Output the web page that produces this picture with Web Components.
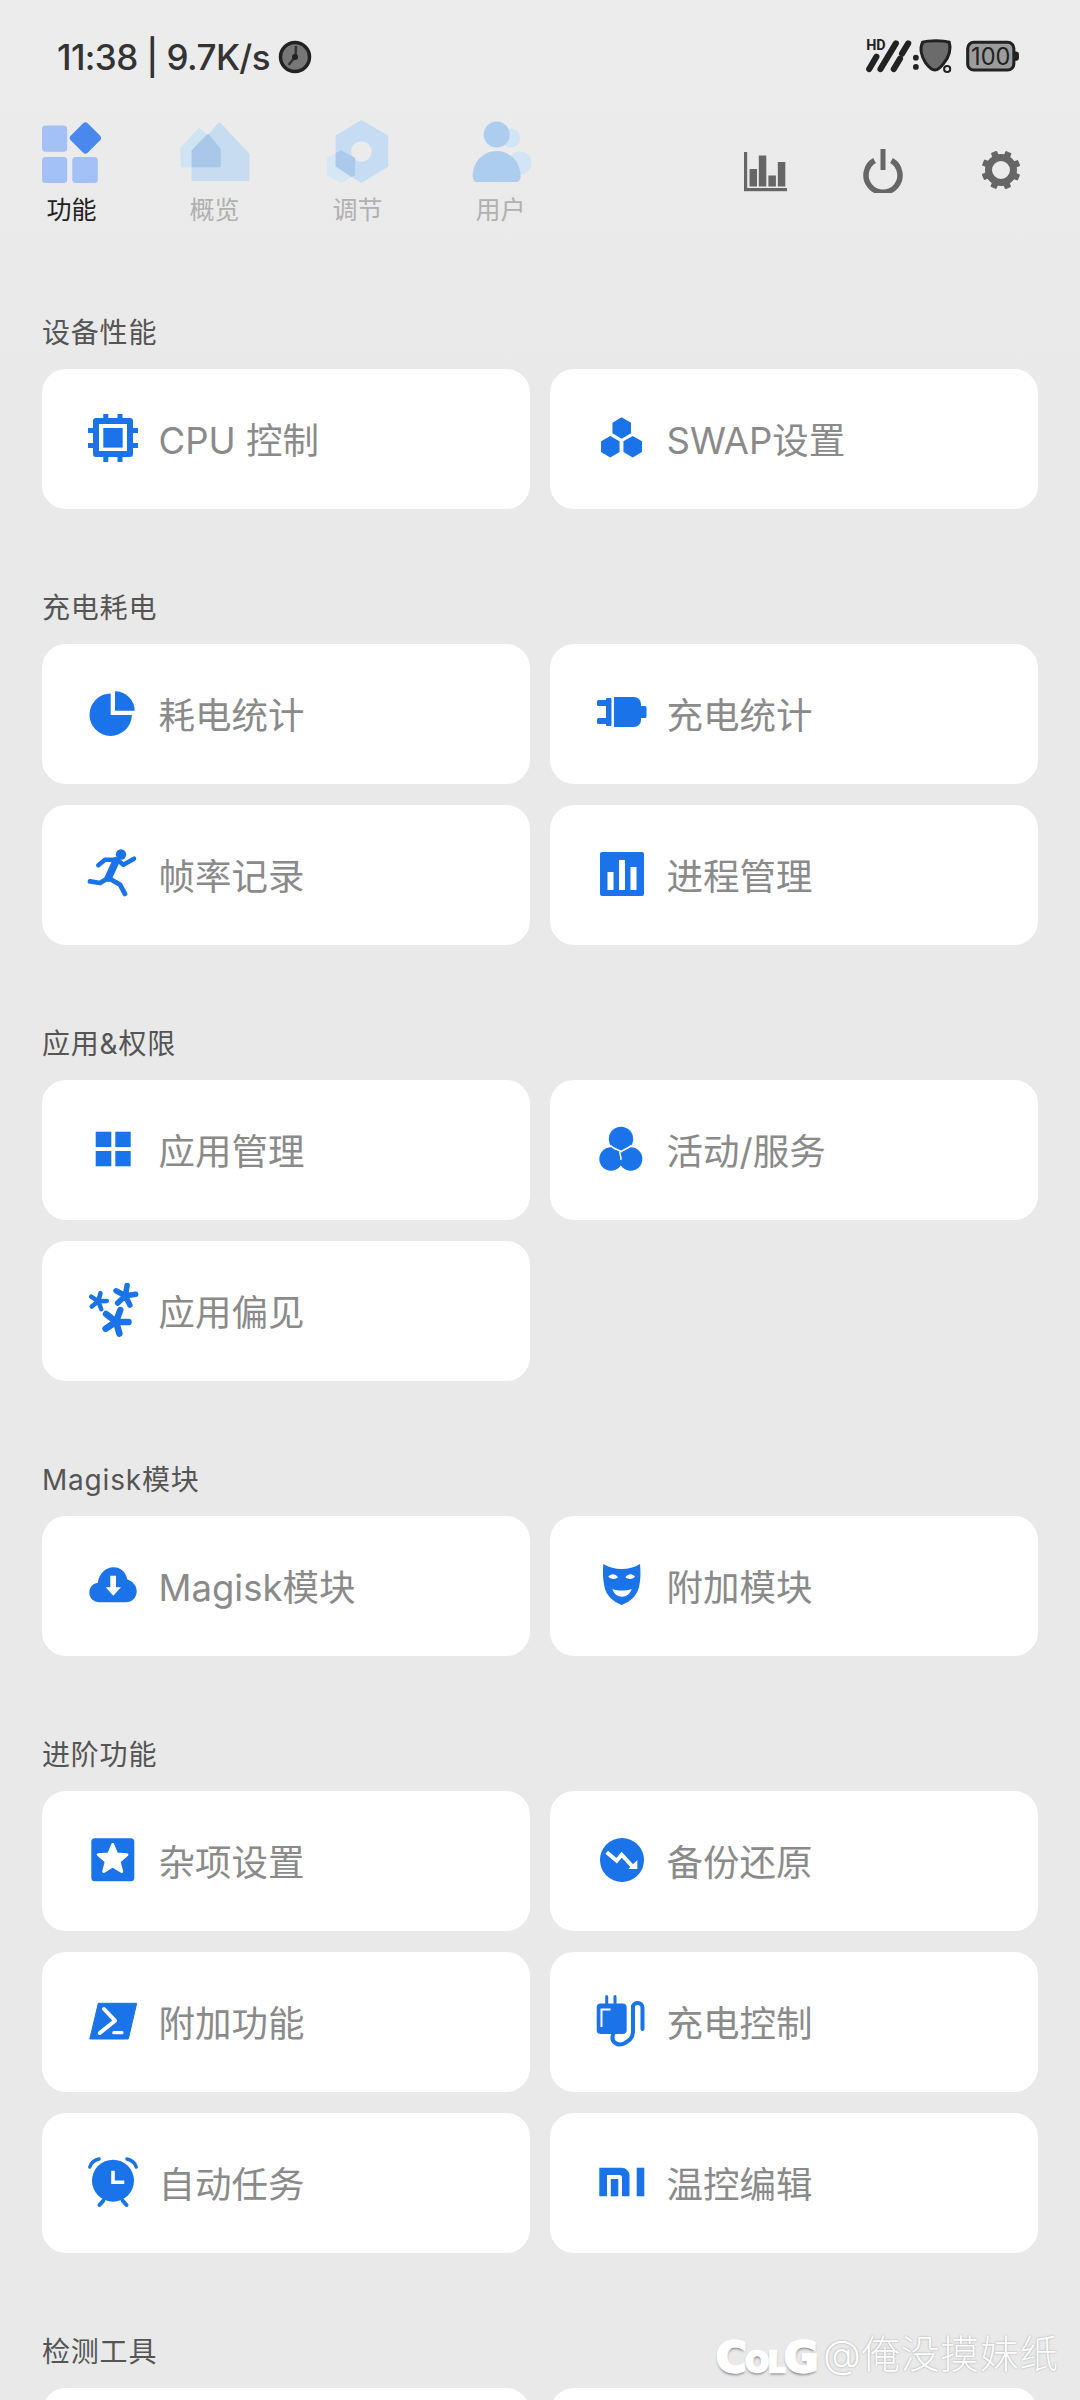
<!DOCTYPE html>
<html lang="zh">
<head>
<meta charset="utf-8">
<title>功能</title>
<style>
html,body{margin:0;padding:0;background:#eaeaea}
body{width:1080px;height:2400px;overflow:hidden;position:relative;font-family:Inter,"Noto Sans CJK SC",sans-serif;background:linear-gradient(#ececec 0,#e9e9e9 420px);}
</style>
</head>
<body>
<status-bar></status-bar>
<top-nav>
  <nav-tab slot="tabs" icon="tabfn" active>功能</nav-tab>
  <nav-tab slot="tabs" icon="tabhome">概览</nav-tab>
  <nav-tab slot="tabs" icon="tabhex">调节</nav-tab>
  <nav-tab slot="tabs" icon="tabuser">用户</nav-tab>
  <nav-action slot="actions" icon="bars"></nav-action>
  <nav-action slot="actions" icon="power"></nav-action>
  <nav-action slot="actions" icon="gear"></nav-action>
</top-nav>
<main-list>
  <feature-section label="设备性能">
    <feature-card icon="cpu">CPU 控制</feature-card>
    <feature-card icon="swap">SWAP设置</feature-card>
  </feature-section>
  <feature-section label="充电耗电">
    <feature-card icon="pie">耗电统计</feature-card>
    <feature-card icon="plug">充电统计</feature-card>
    <feature-card icon="run">帧率记录</feature-card>
    <feature-card icon="chart">进程管理</feature-card>
  </feature-section>
  <feature-section label="应用&amp;权限">
    <feature-card icon="grid">应用管理</feature-card>
    <feature-card icon="trefoil">活动/服务</feature-card>
    <feature-card icon="stars">应用偏见</feature-card>
  </feature-section>
  <feature-section label="Magisk模块">
    <feature-card icon="cloud">Magisk模块</feature-card>
    <feature-card icon="mask">附加模块</feature-card>
  </feature-section>
  <feature-section label="进阶功能">
    <feature-card icon="star">杂项设置</feature-card>
    <feature-card icon="trend">备份还原</feature-card>
    <feature-card icon="term">附加功能</feature-card>
    <feature-card icon="charger">充电控制</feature-card>
    <feature-card icon="alarm">自动任务</feature-card>
    <feature-card icon="mi">温控编辑</feature-card>
  </feature-section>
  <feature-section label="检测工具">
    <feature-card></feature-card>
    <feature-card></feature-card>
  </feature-section>
</main-list>
<app-watermark></app-watermark>
<script>
const B='#1a73e8';
function hex(cx,cy,r){const a=.866*r;return `${cx},${cy-r} ${cx+a},${cy-r/2} ${cx+a},${cy+r/2} ${cx},${cy+r} ${cx-a},${cy+r/2} ${cx-a},${cy-r/2}`}
function aster(cx,cy,r,w,rot){let d='';for(let i=0;i<5;i++){const t=(rot+i*72)*Math.PI/180;d+=`M${cx} ${cy}L${(cx+r*Math.sin(t)).toFixed(1)} ${(cy-r*Math.cos(t)).toFixed(1)}`}return `<path d="${d}" stroke="${B}" stroke-width="${w}" stroke-linecap="round" fill="none"/>`}
const CARD={
cpu:`<g fill="${B}"><path fill-rule="evenodd" d="M10 7h34a3 3 0 0 1 3 3v33a3 3 0 0 1-3 3H10a3 3 0 0 1-3-3V10a3 3 0 0 1 3-3ZM13 13v27h28V13Z"/><rect x="17.3" y="17" width="19.4" height="19.6"/><rect x="17.3" y="3" width="5" height="5"/><rect x="31.5" y="3" width="5" height="5"/><rect x="17.3" y="45" width="5" height="6"/><rect x="31.5" y="45" width="5" height="6"/><rect x="2" y="17" width="6" height="5"/><rect x="2" y="32" width="6" height="5"/><rect x="46" y="17" width="6" height="5"/><rect x="46" y="32" width="6" height="5"/></g>`,
swap:`<g fill="${B}"><polygon points="${hex(27.7,17,10.7)}"/><polygon points="${hex(16.3,35.7,10.7)}"/><polygon points="${hex(38.7,35.7,10.7)}"/></g>`,
pie:`<g fill="${B}"><path d="M24.7 29V7.5A21.2 21.2 0 1 0 45.9 29Z"/><path d="M29 5.3A19.6 19.6 0 0 1 48.7 24.7H29Z"/></g>`,
plug:`<g fill="${B}"><path d="M20 11h20a7 7 0 0 1 7 7v2h4a1.5 1.5 0 0 1 1.5 1.500v9a1.500 1.500 0 0 1-1.500 1.500h-4v2a7 7 0 0 1-7 7H20Z"/><rect x="3" y="14" width="11" height="6" rx="1.500"/><rect x="3" y="32" width="11" height="6" rx="1.500"/><rect x="12" y="12" width="5.500" height="28" rx="1"/></g>`,
run:`<circle cx="35" cy="7.500" r="5.200" fill="${B}"/><g fill="none" stroke="${B}" stroke-linecap="round" stroke-linejoin="round"><path stroke-width="4.500" d="M12.300 18.300L19 12.700H31.300L37.300 17.700L48 11.700"/><path stroke-width="7.500" d="M30 14L22.300 31"/><path stroke-width="4.800" d="M22.300 31L14 36L4 34.300M22.300 31L34 37.700L39 47"/></g>`,
chart:`<rect x="6" y="5" width="44" height="44" rx="2" fill="${B}"/><g fill="#fff"><rect x="13.500" y="25" width="6" height="18"/><rect x="25" y="13" width="6" height="30"/><rect x="36.500" y="20" width="6" height="23"/></g>`,
grid:`<g fill="${B}"><rect x="9.700" y="9.700" width="15.600" height="15.400"/><rect x="29.300" y="9.700" width="15.400" height="15.400"/><rect x="9.700" y="29" width="15.600" height="15.300"/><rect x="29.300" y="29" width="15.400" height="15.300"/></g>`,
trefoil:`<circle cx="17" cy="37" r="11.700" fill="${B}"/><circle cx="36.700" cy="37" r="11.700" fill="${B}"/><path d="M28 27C23 29 28 34 26.800 38" stroke="#fff" stroke-width="1.500" fill="none"/><circle cx="27" cy="17" r="12.200" fill="${B}"/><path d="M16.500 23.500C20 27.500 25 28 27.500 29.500C29 28 33 27 37.500 23.500" stroke="#fff" stroke-width="1.600" fill="none"/>`,
stars:aster(30,38.700,12.500,6.500,20)+aster(39.300,12.700,10.500,5.500,10)+aster(12.300,18.300,8.500,4.500,15),
cloud:`<path fill="${B}" d="M13.500 44.300C7.500 44.300 3.300 39.800 3.300 34.500C3.300 29.500 7 25.500 11.800 24.800C13 15.800 19.500 9.300 27.500 9.300C34.500 9.300 40 14 41.300 21.500C46.800 23 50.700 27.800 50.700 33.300C50.700 39.500 46 44.300 40 44.300Z"/><path fill="#fff" d="M24.300 17.700H30V29.300H35L27.300 37.700L19.700 29.300H24.300Z"/>`,
mask:`<path fill="${B}" d="M9.300 6C15 9.500 21 11 27.700 11C34.500 11 40.500 9.500 46 6C46.800 14 46.700 22 45 29C43 37.500 36.500 43.500 27.700 47C19 43.500 12.300 37.500 10.500 29C9 22 8.500 14 9.300 6Z"/><g fill="#fff"><path d="M14.300 18.700C16.500 15.300 21.500 15.300 24 19.500C21 21.500 17 21.500 14.300 18.700Z"/><path d="M41 18.700C38.800 15.300 33.800 15.300 31.300 19.500C34.300 21.500 38.300 21.500 41 18.700Z"/><path d="M18.300 31C24.500 33 31.500 33 37.700 31C36 36 32.500 38.700 28 38.700C23.500 38.700 20 36 18.300 31Z"/></g>`,
star:`<rect x="5.300" y="5.300" width="43" height="43" rx="3.500" fill="${B}"/><polygon fill="#fff" stroke="#fff" stroke-width="3" stroke-linejoin="round" points="26.700,11.500 30.700,21 41,21.700 33,28.500 35.700,38.500 26.700,33 17.700,38.500 20.300,28.500 12.300,21.700 22.700,21"/>`,
trend:`<circle cx="28" cy="27" r="22" fill="${B}"/><path d="M12.700 19.300L22.700 27.700L27.700 21.700L38.500 33.500" fill="none" stroke="#fff" stroke-width="4"/><polygon fill="#fff" points="43.300,27 43.300,36 34.300,36"/>`,
term:`<polygon fill="${B}" stroke="${B}" stroke-width="1" stroke-linejoin="round" points="12.300,9.300 50.700,9.300 42.300,45 3.800,45"/><path d="M18 15L29 26.700L13.800 39" fill="none" stroke="#fff" stroke-width="4" stroke-linecap="round" stroke-linejoin="round"/><path d="M27.800 38.700H36" stroke="#fff" stroke-width="3.200" stroke-linecap="round"/>`,
charger:`<g fill="none" stroke="${B}" stroke-linecap="round"><path stroke-width="3" d="M12.700 2.500V11M21 2.500V11"/><path stroke-width="4" d="M19.300 40C16 48 24 53 31 49C35 46.500 38.500 44.500 39 38V13C39 8 48.500 7 48.500 14V35"/></g><rect x="2.700" y="9.500" width="30" height="30.500" rx="4" fill="${B}"/><path d="M7.500 33V15.500H16.500" fill="none" stroke="#fff" stroke-width="2"/>`,
alarm:`<circle cx="27" cy="25.700" r="21" fill="${B}"/><g fill="none" stroke="${B}" stroke-linecap="round"><path stroke-width="3.500" d="M3.800 12C5 8 8.500 5 13 4M50.200 12C49 8 45.500 5 41 4"/><path stroke-width="4" d="M17.300 45.700L13.500 50M36.700 45.700L40.500 50"/></g><path d="M27 15.700V27.300H38.300" fill="none" stroke="#fff" stroke-width="3.600"/>`,
mi:`<g fill="${B}"><path d="M5.300 12.700H27.500a8 8 0 0 1 8 8V41.300H28V22.500a2.500 2.500 0 0 0-2.500-2.500H13V41.300H5.300Z"/><rect x="16.800" y="24" width="7.500" height="17.300"/><rect x="42.700" y="12.700" width="7.600" height="28.600"/></g>`
};
const TAB={
tabfn:`<g fill="#a3c1f5"><rect x="6" y="7.500" width="25.200" height="26.200" rx="3.500"/><rect x="6" y="38.900" width="25.200" height="26.100" rx="3.500"/><rect x="36.300" y="38.900" width="25.500" height="26.100" rx="3.500"/></g><rect x="37.400" y="8" width="24" height="24" rx="3.500" fill="#4a88ee" transform="rotate(45 49.400 20)"/>`,
tabhome:`<g stroke-linejoin="round" stroke-width="3"><polygon fill="#c7dbf1" stroke="#c7dbf1" points="40.500,6 69,36.500 69,61.500 14,61.500 14,36.500"/><polygon fill="#cfe4f3" stroke="#cfe4f3" points="20.500,11.500 40.400,31.800 40.400,48 3,48 3,30"/><polygon fill="#a9c8e9" stroke="#a9c8e9" points="29,17.500 40.400,31.800 40.400,48 14,48 14,33"/></g>`,
tabhex:`<path fill-rule="evenodd" fill="#c6dcf3" d="M39.400 2L66.300 17.500V48.500L39.400 65L13.600 48.500V17.500ZM39.400 23.200a10.300 10.300 0 1 0 0 20.600a10.300 10.300 0 0 0 0-20.600Z"/><polygon fill="#d5e6f5" points="19,32 33.200,40 33.200,57 19,65 5,57 5,40"/><polygon fill="#abc9ea" points="19,32 33.200,40 33.200,57 29.800,58.900 13.600,48.500 13.600,35"/>`,
tabuser:`<circle cx="45.800" cy="20" r="9.500" fill="#d3e4f5"/><circle cx="55" cy="45" r="11.500" fill="#d3e4f5"/><circle cx="31.700" cy="16.500" r="13" fill="#adcdee"/><path d="M7.700 58C7.700 44 18 33 31.700 33C45 33 55.600 44 55.600 58C55.600 62 53.500 64 51 64H12C9.500 64 7.700 62 7.700 58Z" fill="#adcdee"/>`
};
const ACTION={
bars:`<g fill="#666"><rect x="2" y="5" width="3.200" height="39"/><rect x="2" y="41" width="43" height="3.200"/><rect x="7.500" y="22" width="7.500" height="17.500"/><rect x="16.800" y="8.500" width="7.500" height="31"/><rect x="26.400" y="28.500" width="7.500" height="11"/><rect x="35.800" y="15" width="7.500" height="24.500"/></g>`,
power:`<path d="M14.500 13.500A17 17 0 1 0 31.500 13.500" fill="none" stroke="#666" stroke-width="5.500"/><rect x="20.500" y="2" width="5" height="21" fill="#666"/>`,
gear:(()=>{let s='<g fill="#666">';for(let i=0;i<8;i++)s+=`<rect x="20" y="3.500" width="6.500" height="9" rx="1" transform="rotate(${i*45+22.500} 23 23)"/>`;return s+'</g><circle cx="23" cy="23" r="12.500" fill="none" stroke="#666" stroke-width="7"/>'})()
};
function el(name,html){customElements.define(name,class extends HTMLElement{constructor(){super();this.attachShadow({mode:'open'}).innerHTML=typeof html==='function'?html(this):html;}});}

el('status-bar',`<style>
:host{display:flex;align-items:center;justify-content:space-between;height:114px;padding:0 60px 0 57px;box-sizing:border-box;color:#333}
.l{display:flex;align-items:center;gap:8px;font-size:35px;font-weight:500;letter-spacing:-.6px;line-height:1}
svg{display:block}
</style>
<div class="l"><span>11:38 | 9.7K/s</span>
<svg width="34" height="34" viewBox="0 0 34 34"><circle cx="17" cy="17" r="14.500" fill="#777" stroke="#222" stroke-width="3.500"/><path d="M17.500 17.500L18 6M17 17L10.500 25" stroke="#333" stroke-width="2.500" fill="none"/><circle cx="17" cy="17" r="3" fill="#222"/></svg></div>
<svg width="159" height="49.400" viewBox="850 34 155 48">
<text x="855" y="51" font-family="Roboto,sans-serif" font-weight="700" font-size="14" fill="#222">HD</text>
<g stroke="#222" stroke-width="6" stroke-linecap="round"><path d="M858 70L865 58M869 70L884 45M882 70L888 60M890 55L896 45"/></g>
<circle cx="903.500" cy="59" r="2.800" fill="#222"/><circle cx="903.500" cy="68" r="2.800" fill="#222"/>
<path d="M910 44C916 42 930 42 936 44C938 50 936 58 931 64C928 68 925 71 922 71C919 71 916 68 913 64C909 58 907 50 910 44Z" fill="#6b6b6b" stroke="#222" stroke-width="3"/>
<circle cx="934" cy="70" r="3" fill="#eee" stroke="#222" stroke-width="2"/>
<rect x="954" y="44" width="45" height="27" rx="6" fill="#9c9c9c" stroke="#222" stroke-width="3"/>
<path d="M1000 53h1a3 3 0 0 1 3 3v3a3 3 0 0 1-3 3h-1Z" fill="#222"/>
<text x="976.500" y="66" text-anchor="middle" font-family="Inter,sans-serif" font-size="23" fill="#222">100</text>
</svg>`);

el('top-nav',`<style>
:host{display:flex;justify-content:space-between;align-items:flex-start;height:118px;padding-top:4px;box-sizing:border-box}
.t{display:flex}
.a{display:flex;padding:29px 20px 0 0}
</style>
<div class="t"><slot name="tabs"></slot></div><div class="a"><slot name="actions"></slot></div>`);

el('nav-tab',h=>`<style>
:host{display:flex;flex-direction:column;align-items:center;width:143px;font-size:25px;line-height:32px;color:${h.hasAttribute('active')?'#222':'#b0b0b0'}}
svg{display:block;overflow:visible;margin-bottom:8px}
</style><svg width="72" height="68" viewBox="0 0 72 68">${TAB[h.getAttribute('icon')]}</svg><slot></slot>`);

el('nav-action',h=>`<style>:host{display:flex;justify-content:center;width:118px}svg{display:block}</style>
<svg width="46" height="46" viewBox="0 0 46 46">${ACTION[h.getAttribute('icon')]}</svg>`);

el('main-list',`<style>:host{display:flex;flex-direction:column;gap:79px;padding-top:81px}</style><slot></slot>`);

el('feature-section',h=>`<style>
:host{display:block;padding:0 42px}
.h{font-size:28px;line-height:40px;letter-spacing:.8px;color:#555;margin-bottom:16px}
.g{display:grid;grid-template-columns:488px 488px;column-gap:20px;row-gap:21px}
</style><div class="h">${h.getAttribute('label').replace('&','&amp;')}</div><div class="g"><slot></slot></div>`);

el('feature-card',h=>{const i=h.getAttribute('icon');return `<style>
:host{display:flex;align-items:center;gap:18.500px;height:140px;padding:0 0 2px 44px;background:#fff;border-radius:24px;box-sizing:border-box;font-size:36.500px;color:#8a8a8a;}
svg{display:block;flex:none}
</style>${i?`<svg width="54" height="54" viewBox="0 0 54 54">${CARD[i]}</svg>`:''}<slot></slot>`});

el('app-watermark',`<style>
:host{position:absolute;left:716px;top:2326px;display:flex;align-items:center;gap:6px;height:50px;}
.logo{font-family:"DejaVu Sans",sans-serif;font-weight:700;font-size:42px;letter-spacing:-1.500px;color:#fff;-webkit-text-stroke:2.500px #fff;text-shadow:0 2px 3px #666;position:relative;top:6px}
.logo small{font-size:28px}
.n{font-size:39px;font-weight:300;color:#fff;letter-spacing:.5px;text-shadow:0 0 2px #999}
</style><span class="logo">C<small>OL</small>G</span><span class="n">@俺没摸妹纸</span>`);
</script>
</body>
</html>
